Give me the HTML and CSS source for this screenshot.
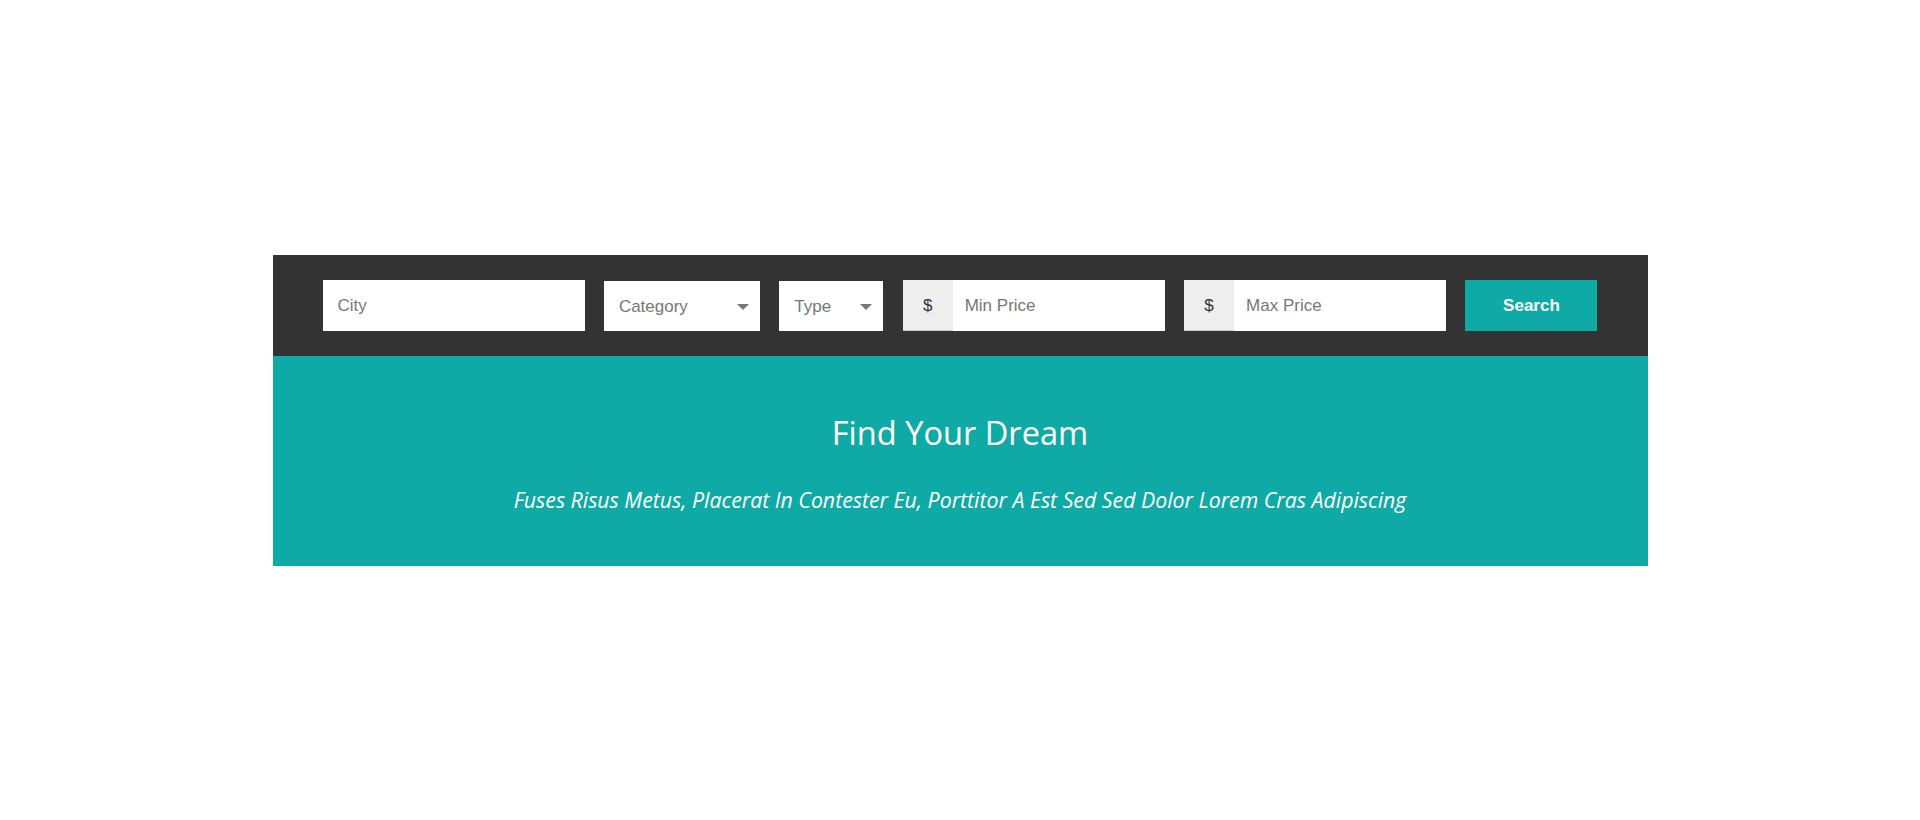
FILE: index.html
```html
<!DOCTYPE html>
<html lang="en">
<head>
<meta charset="utf-8">
<title>Find Your Dream</title>
<link rel="stylesheet" href="styles.css">
</head>
<body>
<div class="page">
  <section class="finder">
    <form class="search-bar" onsubmit="return false">
      <input class="field city" type="text" placeholder="City">
      <div class="dropdown category">
        <span>Category</span>
        <svg class="caret" width="12" height="6" viewBox="0 0 12 6"><path d="M0 0H12L6 6Z" fill="#777"/></svg>
      </div>
      <div class="dropdown type">
        <span>Type</span>
        <svg class="caret" width="12" height="6" viewBox="0 0 12 6"><path d="M0 0H12L6 6Z" fill="#777"/></svg>
      </div>
      <div class="price">
        <span class="addon">$</span>
        <input class="price-input" type="text" placeholder="Min Price">
      </div>
      <div class="price">
        <span class="addon">$</span>
        <input class="price-input" type="text" placeholder="Max Price">
      </div>
      <button class="search-btn" type="submit">Search</button>
    </form>
    <div class="hero">
      <h1 class="hero-title">Find Your Dream</h1>
      <p class="hero-sub">Fuses Risus Metus, Placerat In Contester Eu, Porttitor A Est Sed Sed Dolor Lorem Cras Adipiscing</p>
    </div>
  </section>
</div>
</body>
</html>
```
FILE: styles.css
```css
* {
  box-sizing: border-box;
}

html, body {
  margin: 0;
  padding: 0;
  background: #ffffff;
}

body {
  font-family: "Liberation Sans", Arial, sans-serif;
}

.page {
  padding-top: 255px;
}

.finder {
  width: 1375px;
  margin: 0 auto;
}

.search-bar {
  display: flex;
  justify-content: space-between;
  align-items: flex-start;
  background: #333333;
  padding: 25px 50px;
  margin: 0;
}

.field,
.price-input {
  border: 0;
  outline: none;
  background: #ffffff;
  font-family: "Liberation Sans", Arial, sans-serif;
  font-size: 17px;
  color: #555;
  height: 51px;
  margin: 0;
}

.field::placeholder,
.price-input::placeholder {
  color: #777;
  opacity: 1;
}

.city {
  width: 262px;
  padding: 1px 15px 0;
}

.dropdown {
  display: flex;
  align-items: center;
  justify-content: space-between;
  background: #ffffff;
  height: 50px;
  margin-top: 1px;
  padding: 1px 11px 0 15px;
  font-size: 17px;
  color: #777;
}

.category {
  width: 156px;
}

.type {
  width: 104px;
}

.caret {
  display: block;
  flex: none;
}

.price {
  display: flex;
  width: 262px;
  height: 51px;
  background: #ffffff;
}

.addon {
  flex: none;
  width: 50px;
  display: flex;
  align-items: center;
  justify-content: center;
  padding-top: 2px;
  background: #eeeeee;
  border-bottom: 1px solid #cccccc;
  color: #333333;
  font-size: 17px;
}

.price-input {
  flex: 1;
  min-width: 0;
  padding: 1px 12px 0;
}

.search-btn {
  width: 132px;
  height: 51px;
  border: 0;
  background: #10aaa6;
  color: #ffffff;
  font-family: "Liberation Sans", Arial, sans-serif;
  font-weight: bold;
  font-size: 17px;
  cursor: pointer;
  margin: 0;
}

.hero {
  background: #10aaa6;
  text-align: center;
  padding: 57px 0 52px;
  color: #ffffff;
  font-family: "Open Sans", sans-serif;
}

.hero-title {
  margin: 0 0 33px;
  font-size: 32.6px;
  line-height: 40px;
  font-weight: 400;
}

.hero-sub {
  margin: 0;
  font-size: 21.3px;
  line-height: 28px;
  font-style: italic;
}
```
